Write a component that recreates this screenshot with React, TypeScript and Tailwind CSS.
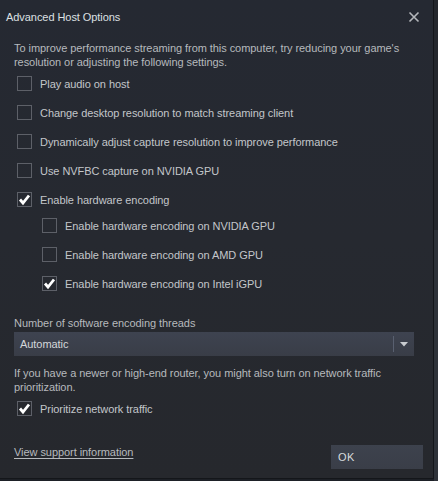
import React from "react";

function Box({ checked }: { checked?: boolean }) {
  return (
    <div className="w-[15px] h-[15px] border border-[#5d6068] flex items-center justify-center shrink-0">
      {checked && (
        <svg width="13" height="13" viewBox="0 0 13 13">
          <path d="M2 6.5 L5 10 L11 2.5" fill="none" stroke="#ffffff" strokeWidth="2.8" strokeLinejoin="miter" />
        </svg>
      )}
    </div>
  );
}

function Row({ label, checked, sub }: { label: string; checked?: boolean; sub?: boolean }) {
  return (
    <div className={`h-[29px] flex items-center ${sub ? "pl-[28px]" : "pl-[3px]"}`}>
      <Box checked={checked} />
      <span className="ml-[8px] text-[#c3c6ca]">{label}</span>
    </div>
  );
}

export default function App() {
  return (
    <div className="w-[438px] h-[481px] bg-[#1d2026] flex text-[11px] leading-[14px] tracking-[-0.06px]" style={{ fontFamily: "'Liberation Sans', Arial, sans-serif" }}>
      <div className="w-[434px] h-[479px] border-r border-b border-[#14161a] bg-gradient-to-b from-[#252932] via-[#262930] to-[#26282d] flex flex-col">
        <div className="h-[34px] flex items-center justify-between pl-[6px] pr-[13px]">
          <span className="text-[#dde0e3]">Advanced Host Options</span>
          <svg width="12" height="12" viewBox="0 0 12 12">
            <path d="M1.5 1.5 L10.5 10.5 M10.5 1.5 L1.5 10.5" stroke="#b4b7bb" strokeWidth="1.6" />
          </svg>
        </div>
        <div className="pl-[14px] pr-[19px] flex flex-col">
          <p className="mt-[7px] text-[#b6b9bd]">
            To improve performance streaming from this computer, try reducing your game's resolution or adjusting the following settings.
          </p>
          <Row label="Play audio on host" />
          <Row label="Change desktop resolution to match streaming client" />
          <Row label="Dynamically adjust capture resolution to improve performance" />
          <Row label="Use NVFBC capture on NVIDIA GPU" />
          <Row label="Enable hardware encoding" checked />
          <div className="mt-[-3px] flex flex-col">
            <Row sub label="Enable hardware encoding on NVIDIA GPU" />
            <Row sub label="Enable hardware encoding on AMD GPU" />
            <Row sub label="Enable hardware encoding on Intel iGPU" checked />
          </div>
          <div className="mt-[18px] text-[#b6b9bd]">Number of software encoding threads</div>
          <div className="mt-[2px] h-[24px] bg-gradient-to-b from-[#3e4350] to-[#393d47] flex items-center">
            <span className="pl-[6px] flex-1 text-[#d4d7da]">Automatic</span>
            <div className="w-px h-[16px] bg-[#596070]" />
            <div className="w-[20px] flex items-center justify-center">
              <svg width="8" height="5" viewBox="0 0 8 5">
                <path d="M0 0 L8 0 L4 4.5 Z" fill="#c9ccd0" />
              </svg>
            </div>
          </div>
          <p className="mt-[10px] text-[#b6b9bd]">
            If you have a newer or high-end router, you might also turn on network traffic prioritization.
          </p>
          <Row label="Prioritize network traffic" checked />
        </div>
        <div className="mt-[22px] pl-[14px] pr-[10px] flex items-start justify-between">
          <span className="underline underline-offset-[2px] text-[#b6b9bd]">View support information</span>
          <div className="w-[92px] h-[24px] bg-gradient-to-b from-[#3d424d] to-[#3a3e48] flex items-center pl-[7px] text-[#d8dbde] tracking-[0.5px]">
            OK
          </div>
        </div>
      </div>
      <div className="flex-1 flex flex-col">
        <div className="h-[230px] bg-[#24272d]" />
        <div className="flex-1 bg-[#2e3239]" />
      </div>
    </div>
  );
}
